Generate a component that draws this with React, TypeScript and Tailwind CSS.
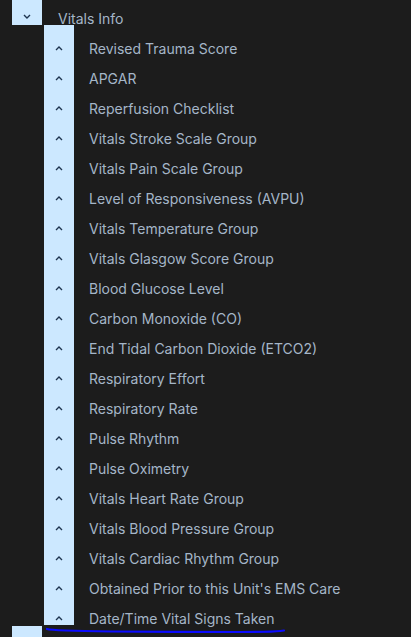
const items = [
  "Revised Trauma Score",
  "APGAR",
  "Reperfusion Checklist",
  "Vitals Stroke Scale Group",
  "Vitals Pain Scale Group",
  "Level of Responsiveness (AVPU)",
  "Vitals Temperature Group",
  "Vitals Glasgow Score Group",
  "Blood Glucose Level",
  "Carbon Monoxide (CO)",
  "End Tidal Carbon Dioxide (ETCO2)",
  "Respiratory Effort",
  "Respiratory Rate",
  "Pulse Rhythm",
  "Pulse Oximetry",
  "Vitals Heart Rate Group",
  "Vitals Blood Pressure Group",
  "Vitals Cardiac Rhythm Group",
  "Obtained Prior to this Unit's EMS Care",
  "Date/Time Vital Signs Taken",
];

function Chevron({ up }: { up?: boolean }) {
  return (
    <svg width="8" height="5" viewBox="0 0 8 5" className={up ? "" : "rotate-180"}>
      <path d="M1 4 L4 1 L7 4" fill="none" stroke="#1f3550" strokeWidth="1.4" />
    </svg>
  );
}

export default function App() {
  return (
    <div
      className="relative h-[637px] w-[411px] overflow-hidden bg-[#1c1c1c] text-[14px] text-[#a5b6c8]"
      style={{ fontFamily: "Inter, 'Noto Sans', sans-serif" }}
    >
      <div className="flex h-[25px] items-start">
        <div className="ml-[12px] flex h-[25px] w-[30px] items-center justify-center bg-[#cce8ff] pt-[8px]">
          <Chevron />
        </div>
        <span className="ml-[16px] mt-[9px] leading-[20px]">Vitals Info</span>
      </div>
      <div className="flex flex-col">
        {items.map((t) => (
          <div key={t} className="flex h-[30px] items-start">
            <div className="ml-[44px] flex h-[30px] w-[30px] justify-center bg-[#cce8ff] pt-[21px]">
              <Chevron up />
            </div>
            <span className="ml-[15px] mt-[14px] leading-[20px]">{t}</span>
          </div>
        ))}
      </div>
      <div className="ml-[12px] mt-[1px] h-[20px] w-[30px] bg-[#cce8ff]" />
      <svg className="absolute left-0 top-[620px]" width="300" height="17" viewBox="0 0 300 17">
        <path
          d="M47 9 C 52 10.5, 70 11, 110 11.5 S 200 12, 240 12 S 275 11.5, 284 10.5"
          fill="none"
          stroke="#0a0aff"
          strokeWidth="2.2"
          strokeLinecap="round"
        />
      </svg>
    </div>
  );
}
